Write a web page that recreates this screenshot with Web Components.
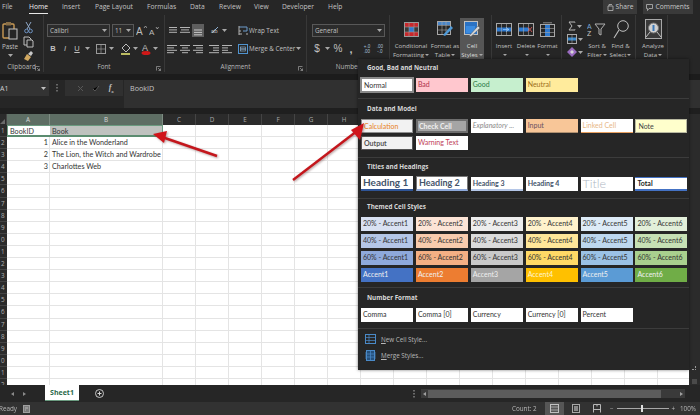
<!DOCTYPE html>
<html>
<head>
<meta charset="utf-8">
<style>
  html, body { margin: 0; padding: 0; background: #262626; }
  body { width: 700px; height: 415px; overflow: hidden; position: relative; font-family: "Open Sans", sans-serif; }
  xl-app { width: 700px; height: 415px; }
</style>
</head>
<body>
<xl-app></xl-app>
<script>
// small helpers for the svg icons, all icons are drawn on their own viewBox
const svg = (w, h, body, vb) => `<svg width="${w}" height="${h}" viewBox="${vb || `0 0 ${w} ${h}`}" fill="none" xmlns="http://www.w3.org/2000/svg">${body}</svg>`;
const caret = (w = 6) => `<span class="car" style="width:${w}px"><svg width="5" height="3" viewBox="0 0 5 3"><path d="M0 0h5L2.5 3z" fill="#a8a8a8"/></svg></span>`;
const lines = (rows) => svg(12, 12, rows.map((r, i) => `<path d="M${r[0]} ${2.5 + i * 2.4}H${r[1]}" stroke="#b4b4b4" stroke-width="1"/>`).join(''));

const ICONS = {
  paste: svg(16, 19, `<rect x="1" y="3" width="11" height="14" rx="1" stroke="#c99a55" stroke-width="1.4"/><rect x="4" y="1" width="5" height="3.5" fill="#8a7048"/><rect x="7" y="8" width="8" height="10" fill="#262626" stroke="#c4c4c4"/>`),
  cut: svg(9, 13, `<path d="M2 1l4 7M7 1L3 8" stroke="#8fa8c8" stroke-width="1"/><circle cx="2.5" cy="10" r="1.8" stroke="#6f94c4"/><circle cx="6.5" cy="10" r="1.8" stroke="#6f94c4"/>`),
  copy: svg(11, 12, `<path d="M1 1h5l2 2v6H1z" stroke="#bdbdbd"/><path d="M4 4h5l1 1v6H4z" fill="#262626" stroke="#bdbdbd"/>`),
  brush: svg(11, 11, `<path d="M1 9l3-5 4 3-3 4z" fill="#d0a860"/><path d="M5 4l3-3 2 2-2 3z" fill="#c8c8c8"/>`),
  grow: svg(11, 11, `<text x="0" y="10" font-family="Liberation Sans" font-size="10" fill="#bdbdbd">A</text><path d="M8 3l1.5-2L11 3" stroke="#bdbdbd" stroke-width=".7"/>`),
  shrink: svg(10, 10, `<text x="0" y="9" font-family="Liberation Sans" font-size="8" fill="#bdbdbd">A</text><path d="M7 1l1.3 2L9.6 1" stroke="#bdbdbd" stroke-width=".7"/>`),
  border: svg(10, 10, `<rect x=".5" y=".5" width="9" height="9" stroke="#9a9a9a"/><path d="M5 .5v9M.5 5h9" stroke="#9a9a9a" stroke-width=".7"/>`),
  fill: svg(10, 12, `<path d="M5 1l4 4-4 4-4-4z" stroke="#bdbdbd"/><rect x="0" y="10" width="9" height="2" fill="#bdbd62"/>`),
  fontcolor: svg(10, 12, `<text x="1" y="8" font-family="Liberation Sans" font-size="9" fill="#c0c0c0">A</text><ellipse cx="5" cy="10" rx="4.5" ry="2" fill="#d01818"/>`),
  orient: svg(11, 11, `<path d="M2 8l6-6" stroke="#8fb0d0"/><text x="1" y="8" font-family="Liberation Sans" font-size="6" fill="#c0c0c0">ab</text>`),
  wrap: svg(10, 11, `<path d="M1 2h8v4H5" stroke="#6d9ccc" fill="none"/><path d="M1 1v9M9 8v2M1 6h2M1 9h3" stroke="#b0b0b0"/>`),
  merge: svg(10, 10, `<rect x=".5" y=".5" width="9" height="9" stroke="#4f93cf"/><path d="M2.5 5h5" stroke="#9cc2e4"/><rect x="2.5" y="3" width="5" height="4" stroke="#9cc2e4" stroke-width=".6"/>`),
  condfmt: svg(15, 15, `<rect x=".5" y=".5" width="14" height="14" fill="#3a3a3a" stroke="#9a9a9a"/><rect x="1" y="1" width="13" height="4" fill="#c8282c"/><rect x="1" y="10" width="13" height="4" fill="#c8282c"/><rect x="5" y="5" width="5" height="5" fill="#2f7ad0"/><path d="M5 .5v14M10 .5v14M.5 5h14M.5 10h14" stroke="#9a9a9a" stroke-width=".6"/>`),
  fmttable: svg(16, 16, `<rect x=".5" y=".5" width="13" height="13" stroke="#a8a8a8"/><rect x="1" y="1" width="12" height="3" fill="#4a86c8"/><path d="M5 .5v13M9 .5v13M.5 4.5h13M.5 9h13" stroke="#a8a8a8" stroke-width=".6"/><path d="M6 14l8-9 2 2-8 8z" fill="#4f9ad8"/>`),
  cellstyle: svg(16, 16, `<rect x=".5" y=".5" width="13" height="13" fill="#2a72c4" stroke="#c0c0c0"/><rect x="2" y="5" width="9" height="7" fill="#3a8be0"/><path d="M5 15l9-10 2 2-9 8.500z" fill="#d8d8d8" stroke="#555" stroke-width=".5"/>`),
  insert: svg(16, 13, `<rect x=".5" y=".5" width="15" height="12" stroke="#a8a8a8"/><rect x="1" y="4.500" width="14" height="4" fill="#2f7ad0"/><path d="M5.500 .5v12M10.500 .5v12" stroke="#a8a8a8" stroke-width=".6"/><path d="M7 6.500h6M10 4.500l3 2-3 2" stroke="#9ad0ff" stroke-width=".7"/>`),
  del: svg(16, 13, `<rect x=".5" y=".5" width="15" height="12" stroke="#a8a8a8"/><rect x="1" y="4.500" width="10" height="4" fill="#2f7ad0"/><path d="M5.500 .5v12M10.500 .5v12" stroke="#a8a8a8" stroke-width=".6"/><path d="M10 4l4 5M14 4l-4 5" stroke="#c05050"/>`),
  format: svg(15, 15, `<path d="M3 .8h9" stroke="#8a8a8a"/><rect x=".5" y="2.500" width="14" height="12" stroke="#a8a8a8"/><rect x="5" y="3" width="5" height="11" fill="#2f7ad0"/><path d="M.5 6.500h14M.5 10.500h14" stroke="#a8a8a8" stroke-width=".6"/>`),
  sum: svg(8, 10, `<path d="M7 1.500V1H1l3 4-3 4h6v-.5" stroke="#b8b8b8"/>`),
  clear: svg(10, 10, `<rect x=".5" y=".5" width="9" height="9" stroke="#a8a8a8"/><rect x="1" y="3.500" width="8" height="3" fill="#3a8bd0"/><path d="M5 .5v9" stroke="#a8a8a8" stroke-width=".6"/>`),
  eraser: svg(10, 10, `<path d="M5 0l5 5-5 5-5-5z" fill="#9a6cc0"/><path d="M5 3l2 2-2 2-2-2z" fill="#d8d8d8"/>`),
  sort: svg(20, 15, `<text x="0" y="6.500" font-family="Liberation Sans" font-size="7" fill="#7aa8d8">A</text><text x="0" y="14" font-family="Liberation Sans" font-size="7" fill="#c8c8c8">Z</text><path d="M8 2h10l-4 5v6l-2-1V7z" stroke="#b0b0b0"/>`),
  find: svg(16, 19, `<circle cx="10" cy="6" r="5.300" stroke="#c0c0c0"/><path d="M6 10L1 18" stroke="#c0c0c0" stroke-width="1.100"/>`),
  analyze: svg(17, 20, `<rect x=".5" y=".5" width="16" height="19" fill="#3a3a3a" stroke="#a8a8a8"/><circle cx="8.500" cy="9" r="5" fill="#d0d0d0" stroke="#777"/><rect x="7.500" y="6" width="2" height="6" fill="#3a78b8"/><path d="M12 13l4 5M5 13l-4 5" stroke="#c0c0c0"/>`),
  newstyle: svg(11, 10, `<rect x=".5" y=".5" width="10" height="9" stroke="#4a8ac8"/><path d="M.5 3.500h10M.5 6.500h10M4 .5v9" stroke="#4a8ac8" stroke-width=".7"/>`),
  mergestyle: svg(11, 11, `<rect x="1.500" y=".5" width="8" height="10" fill="#25507c" stroke="#4a8ac8"/><path d="M0 2v7M11 2v7M5.500 .5v10M1.500 4h8M1.500 7h8" stroke="#4a8ac8" stroke-width=".7"/>`),
};

class XlBase extends HTMLElement {
  constructor() {
    super();
    this.attachShadow({ mode: 'open' }); // open so the texts can be read
  }
  getStyles() { return ''; }
  getMarkup() { return ''; }
  connectedCallback() {
    const template = document.createElement('template');
    template.innerHTML = `<style>${this.getStyles()}</style>${this.getMarkup()}`;
    this.shadowRoot.appendChild(template.content.cloneNode(true));
  }
}

// top tabs + share / comments
class XlTabs extends XlBase {
  getStyles() { return `
    :host { display: flex; height: 14px; background: #262626; color: #c4c4c4; font: 6.700px/14px "Open Sans", sans-serif; position: relative; }
    span { display: block; }
    .on { color: #f0f0f0; border-bottom: 1.500px solid #e8e8e8; height: 12.500px; line-height: 14px; }
    .right { margin-left: auto; display: flex; gap: 6px; padding-right: 7px; }
    .btn { background: #3a3a3a; color: #c8c8c8; height: 14px; display: flex; align-items: center; justify-content: center; gap: 2px; font-size: 6.700px; }
  `; }
  getMarkup() {
    const tabs = [['File', 2, 10], ['Home', 17, 19], ['Insert', 14, 17], ['Page Layout', 16, 37], ['Formulas', 15, 28], ['Data', 15, 14], ['Review', 15, 21], ['View', 14, 16], ['Developer', 12, 31], ['Help', 15, 14]];
    return tabs.map(t => `<span class="${t[0] === 'Home' ? 'on' : ''}" style="margin-left:${t[1]}px;width:${t[2]}px;white-space:nowrap">${t[0]}</span>`).join('') + `
      <div class="right">
        <div class="btn" style="width:34px">${svg(7, 8, '<path d="M1 3h5v4.500H1zM2 3V1.500h3" stroke="#b8b8b8" stroke-width=".8"/>')}Share</div>
        <div class="btn" style="width:50px">${svg(7, 7, '<path d="M.5.5h6v4H3L1.500 6.500v-2h-1z" stroke="#b8b8b8" stroke-width=".8"/>')}Comments</div>
      </div>`;
  }
}

// one ribbon group with its caption at the bottom
class RibbonGroup extends XlBase {
  getStyles() { return `
    :host { display: flex; flex-direction: column; box-sizing: border-box; border-right: 1px solid #383838; height: 57px; margin-top: 1px; flex: none; }
    .body { height: 47px; display: block; }
    .cap { height: 9px; font: 6.300px/9px "Open Sans", sans-serif; color: #b8b8b8; text-align: center; position: relative; }
    .lnch { position: absolute; right: 3px; top: 2px; }
  `; }
  getMarkup() {
    const launch = this.hasAttribute('launcher') ? `<span class="lnch">${svg(5, 5, '<path d="M.5.5h4M.5.5v4M2 2l2.500 2.500M4.500 2.500v2h-2" stroke="#a0a0a0" stroke-width=".7"/>')}</span>` : '';
    return `<div class="body"><slot></slot></div><div class="cap">${this.getAttribute('label') || ''}${launch}</div>`;
  }
}

// tall button with icon and two lines of text
class BigButton extends XlBase {
  getStyles() { return `
    :host { display: flex; flex-direction: column; align-items: center; height: 42px; box-sizing: border-box; color: #c0c0c0; font: 6.100px/9px "Open Sans", sans-serif; white-space: nowrap; flex: none; }
    :host([active]) { background: #565656; color: #dcdcdc; }
    .ic { height: 22px; display: flex; align-items: center; justify-content: center; }
    .tx { text-align: center; margin-top: 1px; }
    .car { display: inline-block; width: 0; height: 0; border: 2px solid transparent; border-top: 2.500px solid #a8a8a8; border-bottom: 0; vertical-align: middle; margin-left: 1px; }
  `; }
  getMarkup() {
    const l1 = this.getAttribute('l1') || '', l2 = this.getAttribute('l2') || '';
    return `<div class="ic"><slot></slot></div><div class="tx">${l1}<br>${l2}<i class="car"></i></div>`;
  }
}

class XlRibbon extends XlBase {
  getStyles() { return `
    :host { display: flex; height: 60px; background: #262626; color: #c0c0c0; font: 6.300px "Open Sans", sans-serif; overflow: hidden; }
    .row { display: flex; align-items: center; height: 13px; }
    .car { display: flex; justify-content: center; align-items: center; flex: none; height: 13px; }
    .box { height: 13px; box-sizing: border-box; border: 1px solid #585858; display: flex; align-items: center; justify-content: space-between; padding: 0 2px; color: #c0c0c0; background: #2c2c2c; font: 6.300px "Open Sans", sans-serif; }
    .it { flex: none; width: 12px; height: 13px; display: flex; align-items: center; justify-content: center; font: 7.500px "Liberation Sans", sans-serif; color: #c0c0c0; }
    .hl { background: #5e5e5e; }
    .sm { color: #c0c0c0; white-space: nowrap; }
    .clip { display: flex; padding: 6px 0 0 2px; gap: 3px; }
    .col { display: flex; flex-direction: column; align-items: center; }
    .btns { display: flex; }
  `; }
  getMarkup() { return `
    <ribbon-group label="Clipboard" launcher style="width:44px;text-align:left">
      <div class="clip">
        <div class="col" style="width:16px">
          ${ICONS.paste}
          <span style="margin-top:2px;line-height:9px">Paste</span>
          <span class="car" style="height:8px"><svg width="5" height="3" viewBox="0 0 5 3"><path d="M0 0h5L2.500 3z" fill="#a8a8a8"/></svg></span>
        </div>
        <div class="col" style="width:14px;gap:2px;margin-left:0px">
          ${ICONS.cut}${ICONS.copy}${ICONS.brush}
        </div>
      </div>
    </ribbon-group>
    <ribbon-group label="Font" launcher style="width:121px">
      <div class="row" style="margin:9px 0 5px 3px">
        <div class="box" style="width:63px">Calibri ${caret(5)}</div>
        <div class="box" style="width:22px;margin-left:2px">11 ${caret(5)}</div>
        <span class="it" style="margin-left:1px">${ICONS.grow}</span>
        <span class="it" style="margin-left:1px">${ICONS.shrink}</span>
      </div>
      <div class="row" style="margin-left:3px">
        <span class="it"><b>B</b></span><span class="it"><i>I</i></span><span class="it"><u>U</u></span>${caret(8)}
        <span class="it" style="margin-left:4px">${ICONS.border}</span>${caret(8)}
        <span class="it" style="margin-left:5px">${ICONS.fill}</span>${caret(6)}
        <span class="it" style="margin-left:2px">${ICONS.fontcolor}</span>${caret(6)}
      </div>
    </ribbon-group>
    <ribbon-group label="Alignment" launcher style="width:142px">
      <div class="row" style="margin:9px 0 5px 2px">
        <span class="it">${lines([[2, 10], [2, 10], [2, 10]])}</span>
        <span class="it">${lines([[1, 11], [2, 10], [1, 11]])}</span>
        <span class="it hl" style="margin-left:1px">${svg(12, 12, '<path d="M2 5h8M2 7.400h8M2 9.800h8" stroke="#c8c8c8"/>')}</span>
        <span class="it" style="margin-left:5px">${ICONS.orient}</span>${caret(6)}
        <span class="it" style="margin-left:11px;width:10px">${ICONS.wrap}</span>
        <span class="sm" style="margin-left:1px">Wrap Text</span>
      </div>
      <div class="row" style="margin-left:1px">
        <span class="it">${lines([[1, 11], [1, 8], [1, 11], [1, 8]])}</span>
        <span class="it" style="margin-left:1px">${lines([[1, 11], [3, 9], [1, 11], [3, 9]])}</span>
        <span class="it" style="margin-left:1px">${lines([[1, 11], [4, 11], [1, 11], [4, 11]])}</span>
        <span class="it" style="margin-left:4px">${lines([[1, 11], [5, 11], [5, 11], [1, 11]])}</span>
        <span class="it" style="margin-left:1px">${lines([[1, 11], [1, 7], [1, 7], [1, 11]])}</span>
        <span class="it" style="margin-left:5px;width:10px">${ICONS.merge}</span>
        <span class="sm" style="margin-left:1px;width:46px">Merge &amp; Center</span>
        ${caret(6)}
      </div>
    </ribbon-group>
    <ribbon-group label="Number" style="width:83px">
      <div class="row" style="margin:9px 0 5px 5px">
        <div class="box" style="width:73px">General ${caret(5)}</div>
      </div>
      <div class="row" style="margin-left:4px">
        <span class="it" style="font-size:10px">$</span>${caret(8)}
        <span class="it" style="font-size:10px;margin-left:1px">%</span>
        <span class="it" style="font-size:11px;margin-left:1px"><b>,</b></span>
        <span class="it" style="margin-left:4px;font-size:4.500px;line-height:5px;text-align:center;color:#a8c0d8">+.0<br>.00</span>
        <span class="it" style="margin-left:1px;font-size:4.500px;line-height:5px;text-align:center;color:#a8c0d8">.00<br>-.0</span>
      </div>
    </ribbon-group>
    <ribbon-group style="width:102px">
      <div class="btns" style="padding:3px 0 0 4px">
        <big-button l1="Conditional" l2="Formatting" style="width:34px">${ICONS.condfmt}</big-button>
        <big-button l1="Format as" l2="Table" style="width:30px;margin-left:2px">${ICONS.fmttable}</big-button>
        <big-button l1="Cell" l2="Styles" active style="width:24px">${ICONS.cellstyle}</big-button>
      </div>
    </ribbon-group>
    <ribbon-group style="width:70px">
      <div class="btns" style="padding:3px 0 0 1px">
        <big-button l1="Insert" style="width:22px">${ICONS.insert}</big-button>
        <big-button l1="Delete" style="width:22px">${ICONS.del}</big-button>
        <big-button l1="Format" style="width:21px">${ICONS.format}</big-button>
      </div>
    </ribbon-group>
    <ribbon-group style="width:74px">
      <div class="btns" style="padding:3px 0 0 3px">
        <div class="col" style="width:20px;gap:3px;padding-top:3px">
          <div class="row" style="height:10px">${ICONS.sum}${caret(6)}</div>
          <div class="row" style="height:10px">${ICONS.clear}${caret(6)}</div>
          <div class="row" style="height:10px">${ICONS.eraser}${caret(6)}</div>
        </div>
        <big-button l1="Sort &amp;" l2="Filter" style="width:24px">${ICONS.sort}</big-button>
        <big-button l1="Find &amp;" l2="Select" style="width:23px">${ICONS.find}</big-button>
      </div>
    </ribbon-group>
    <ribbon-group style="width:32px;border-right:1px solid #383838">
      <div class="btns" style="padding:3px 0 0 3px">
        <big-button l1="Analyze" l2="Data" style="width:28px">${ICONS.analyze}</big-button>
      </div>
    </ribbon-group>
  `; }
}

class XlFormula extends XlBase {
  getStyles() { return `
    :host { display: flex; flex-direction: column; height: 40px; background: #262626; color: #bdbdbd; font: 7px "Open Sans", sans-serif; }
    .gap { height: 6px; background: #1c1c1c; }
    .bar { display: flex; height: 28px; background: #262626; }
    .name { width: 49px; height: 16px; background: #333; display: flex; align-items: center; justify-content: space-between; padding: 0 3px 0 0; box-sizing: border-box; color: #d0d0d0; }
    .dots { width: 16px; height: 16px; display: flex; align-items: center; justify-content: center; }
    .fx { width: 58px; height: 16px; background: #303030; display: flex; align-items: center; justify-content: space-around; padding: 0 5px 0 8px; box-sizing: border-box; }
    .input { flex: 1; background: #303030; margin-left: 1px; padding: 3px 6px; font-size: 7.200px; color: #c4c4c4; }
    .under { height: 6px; background: #1f1f1f; }
  `; }
  getMarkup() { return `
    <div class="gap"></div>
    <div class="bar">
      <div class="name"><span>A1</span><svg width="5" height="3" viewBox="0 0 5 3"><path d="M0 0h5L2.500 3z" fill="#c0c0c0"/></svg></div>
      <div class="dots"><svg width="2" height="8" viewBox="0 0 2 8"><path d="M1 0v1.500M1 3v1.500M1 6v1.500" stroke="#a8a8a8"/></svg></div>
      <div class="fx">
        <svg width="7" height="7" viewBox="0 0 7 7"><path d="M1 1l5 5M6 1L1 6" stroke="#585858"/></svg>
        <svg width="8" height="7" viewBox="0 0 8 7"><path d="M1 4l2 2 4-5" stroke="#585858"/></svg>
        <span style="font:italic bold 8px 'Liberation Serif',serif;color:#c0c0c0">f<sub style="font-size:5px">x</sub></span>
      </div>
      <div class="input">BookID</div>
    </div>
    <div class="under"></div>
  `; }
}

// worksheet grid, rows are 12.1px high
class XlSheet extends XlBase {
  getStyles() { return `
    :host { display: flex; height: 271px; background: #fff; overflow: hidden; }
    .grid { display: grid; grid-template-columns: 7px 43px 113px repeat(16, 33px); grid-template-rows: 11px repeat(22, 12.100px); width: 689px; flex: none; font: 7.200px/12px Lato, sans-serif; color: #333; overflow: hidden; position: relative; }
    .ch { background: #2b2b2b; color: #a8a8a8; text-align: center; font: 6.300px/11px "Open Sans", sans-serif; border-right: 1px solid #444; box-sizing: border-box; }
    .ch.sel { background: #5e6e64; color: #d8d8d8; border-right-color: #7d8c82; }
    .corner { display: flex; align-items: flex-end; justify-content: flex-end; padding: 0 1px 1px 0; }
    .rh { background: #2b2b2b; color: #b0b0b0; font: 6.300px/12px "Open Sans", sans-serif; text-align: left; overflow: hidden; text-indent: 1px; border-bottom: 1px solid #444; box-sizing: border-box; }
    .c { border-right: 1px solid #e4e4e4; border-bottom: 1px solid #e4e4e4; box-sizing: border-box; padding: 0 1px 0 2px; white-space: nowrap; min-width: 0; }
    .num { text-align: right; }
    .a1 { border: 1px solid #6b9b80; border-right: 0; border-bottom: 2px solid #5b8c70; }
    .b1 { background: #bfc2bf; border: 1px solid #6b9b80; border-left: 0; border-bottom: 2px solid #5b8c70; }
    .sb { flex: 1; background: #2b2b2b; position: relative; }
    .arr { position: absolute; left: 3px; bottom: 1px; width: 5px; height: 5px; background: #4a4a4a; }
    .grip { position: absolute; left: 3px; top: 252px; width: 3px; height: 3px; border-right: 1px dotted #999; border-bottom: 1px dotted #999; }
  `; }
  getMarkup() {
    // letters after H sit under the open menu, so only their boxes are kept
    const cols = ['A', 'B', 'C', 'D', 'E', 'F', 'G', 'H', '', '', '', '', '', '', '', '', '', ''];
    const data = { 1: ['BookID', 'Book'], 2: ['1', 'Alice in the Wonderland'], 3: ['2', 'The Lion, the Witch and Wardrobe'], 4: ['3', 'Charlottes Web'] };
    let out = `<div class="ch corner"><svg width="5" height="5" viewBox="0 0 5 5"><path d="M5 0v5H0z" fill="#6a6a6a"/></svg></div>` + cols.map((c, i) => `<div class="ch ${i < 2 ? 'sel' : ''}">${c}</div>`).join('');
    for (let r = 1; r <= 22; r++) {
      const d = data[r] || ['', ''];
      out += `<div class="rh">${r % 10}</div>`;
      cols.forEach((c, i) => {
        let cls = 'c';
        if (r === 1 && i === 0) cls += ' a1';
        if (r === 1 && i === 1) cls += ' b1';
        if (i === 0 && r > 1) cls += ' num';
        out += `<div class="${cls}">${i < 2 ? d[i] : ''}</div>`;
      });
    }
    return `<div class="grid">${out}</div><div class="sb"><div class="grip"></div><div class="arr"></div></div>`;
  }
}

class XlSheetTabs extends XlBase {
  getStyles() { return `
    :host { display: flex; align-items: flex-start; height: 17px; background: #262626; color: #b0b0b0; font: 7px "Open Sans", sans-serif; }
    .nav { width: 45px; display: flex; justify-content: space-around; height: 17px; align-items: center; padding: 0 14px 0 6px; box-sizing: border-box; }
    .tab { width: 34px; height: 15px; background: #fff; color: #2b6a4a; font: 700 7px/15px "Open Sans", sans-serif; text-align: center; border-bottom: 1px solid #6b9b80; box-sizing: content-box; }
    .plus { margin-left: 16px; height: 17px; display: flex; align-items: center; }
    .dots { margin-left: 309px; height: 17px; display: flex; align-items: center; }
    .track { margin: 4px 0 0 6px; width: 264px; height: 9px; background: #3a3a3a; display: flex; align-items: center; }
    .end { flex: none; width: 7px; height: 9px; display: flex; align-items: center; justify-content: center; }
    .thumb { width: 233px; height: 8px; background: #5c5c5c; }
  `; }
  getMarkup() { return `
    <div class="nav">
      <svg width="3" height="4" viewBox="0 0 3 4"><path d="M3 0v4L0 2z" fill="#8a8a8a"/></svg>
      <svg width="3" height="4" viewBox="0 0 3 4"><path d="M0 0v4l3-2z" fill="#8a8a8a"/></svg>
    </div>
    <div class="tab">Sheet1</div>
    <div class="plus"><svg width="9" height="9" viewBox="0 0 9 9"><circle cx="4.500" cy="4.500" r="4" stroke="#c8c8c8" fill="none"/><path d="M2.500 4.500h4M4.500 2.500v4" stroke="#d8d8d8"/></svg></div>
    <div class="dots"><svg width="2" height="8" viewBox="0 0 2 8"><path d="M1 0v1.500M1 3v1.500M1 6v1.500" stroke="#b0b0b0"/></svg></div>
    <div class="track">
      <span class="end"><svg width="3" height="4" viewBox="0 0 3 4"><path d="M3 0v4L0 2z" fill="#a0a0a0"/></svg></span>
      <div class="thumb"></div>
      <span class="end" style="margin-left:auto"><svg width="3" height="4" viewBox="0 0 3 4"><path d="M0 0v4l3-2z" fill="#a0a0a0"/></svg></span>
    </div>
  `; }
}

class XlStatus extends XlBase {
  getStyles() { return `
    :host { display: flex; align-items: center; height: 13px; background: #323232; color: #b8b8b8; font: 6.300px "Open Sans", sans-serif; }
    .ready { margin-left: -1px; width: 24px; }
    .count { margin-left: auto; width: 33px; white-space: nowrap; }
    .view { height: 13px; display: flex; align-items: center; justify-content: center; }
    .on { background: #565656; }
    .zoom { display: flex; align-items: center; width: 65px; margin-left: 4px; justify-content: space-between; }
    .slider { position: relative; width: 52px; height: 1px; background: #a8a8a8; }
    .slider i { position: absolute; left: 24px; top: -3px; width: 2px; height: 7px; background: #e0e0e0; }
    .pct { width: 18px; margin-left: 3px; margin-right: 4px; text-align: right; white-space: nowrap; }
  `; }
  getMarkup() { return `
    <span class="ready">Ready</span>
    ${svg(7, 8, '<rect x=".5" y=".5" width="6" height="7" fill="#7c7c7c" stroke="#a0a0a0"/><path d="M2 3h3M2 5h1" stroke="#ddd" stroke-width=".6"/>')}
    <span class="count">Count: 2</span>
    <div class="view on" style="width:19px">${svg(9, 9, '<rect x=".5" y=".5" width="8" height="8" stroke="#c0c0c0"/><path d="M.5 3h8M.5 6h8" stroke="#c0c0c0" stroke-width=".7"/>')}</div>
    <div class="view" style="width:24px">${svg(8, 9, '<rect x=".5" y=".5" width="7" height="8" stroke="#a8a8a8"/><rect x="2" y="2" width="4" height="5" fill="#888"/>')}</div>
    <div class="view" style="width:18px">${svg(8, 9, '<path d="M.5 8.500V.5h7v8M.5 5.500h7M4 .5v2" stroke="#b8b8b8"/>')}</div>
    <div class="zoom"><span>−</span><div class="slider"><i></i></div><span>+</span></div>
    <span class="pct">100%</span>
  `; }
}

// one swatch of the gallery
class StyleChip extends XlBase {
  getStyles() { return `
    :host { display: block; box-sizing: border-box; height: 14px; padding: 0 2px; overflow: hidden; white-space: nowrap; font: 7px/13px Lato, sans-serif; background: var(--bg, #fff); color: var(--fg, #333); }
  `; }
  getMarkup() { return `<slot></slot>`; }
}

// caption + gallery, divider is the border at the bottom
class StyleSection extends XlBase {
  getStyles() { return `
    :host { display: block; border-bottom: 1px solid #3c3c3c; }
    .lab { font: 700 6.300px/10px "Open Sans", sans-serif; color: #d8d8d8; height: 10px; padding-left: 9px; margin-bottom: 5px; }
    .gal { display: grid; grid-template-columns: repeat(6, 52px); gap: 3px 2.900px; padding-left: 3px; }
  `; }
  getMarkup() { return `<div class="lab">${this.getAttribute('label')}</div><div class="gal"><slot></slot></div>`; }
}

class StylesMenu extends XlBase {
  getStyles() { return `
    :host { display: block; position: absolute; left: 358px; top: 59px; width: 331px; height: 311px; background: #262626; box-shadow: 0 0 3px rgba(0,0,0,.5); }
    .act { display: flex; align-items: center; gap: 5px; padding-left: 7px; height: 16px; font: 6.300px "Open Sans", sans-serif; color: #b8b8b8; }
    .acts { padding-top: 2px; }
    u { text-underline-offset: 1px; }
    .cal { --bg: #f2f2f2; --fg: #e8821e; border: 1px solid #8f8f8f; line-height: 12px; }
    .chk { --bg: #a5a5a5; --fg: #f0f0f0; border: 2px solid #6e6e6e; line-height: 10px; font-weight: 700; padding: 0 1px; }
    .inp { --bg: #f8c698; --fg: #6a5060; border-bottom: 1px solid #b09070; }
    .lnk { --fg: #e8b888; border-bottom: 1px solid #e8a060; }
    .not { --bg: #ffffcc; --fg: #444; border: 1px solid #b8b8a0; line-height: 12px; }
    .out { --bg: #f2f2f2; --fg: #555; border: 1px solid #555; line-height: 12px; font-weight: 700; }
    .h1 { --fg: #44546a; font-size: 10px; font-weight: 700; border-bottom: 2px solid #2f5597; line-height: 12px; height: 15px; margin-top: -1px; }
    .h2 { --fg: #44546a; font-size: 9px; font-weight: 700; border: 1px solid #777; border-bottom: 2px solid #8ea9db; line-height: 12px; height: 15px; margin-top: -1px; }
    .h3 { --fg: #44546a; font-weight: 700; border-bottom: 2px solid #b4c6e7; }
    .h4 { --fg: #44546a; font-weight: 700; }
    .tit { --fg: #aeb6c2; font-size: 12.500px; font-weight: 300; line-height: 13px; }
    .tot { --fg: #222; font-weight: 700; border-top: 1px solid #4472c4; border-bottom: 2px solid #4472c4; line-height: 11px; }
  `; }
  getMarkup() {
    const row = (n, c1) => [1, 2, 3, 4, 5, 6].map((i, k) => `<style-chip style="--bg:${c1[k]}">${n} - Accent${i}</style-chip>`).join('');
    const c20 = ['#d9e1f2', '#fce4d6', '#ededed', '#fff2cc', '#ddebf7', '#e2efda'];
    const c40 = ['#b4c6e7', '#f8cbad', '#dbdbdb', '#ffe699', '#bdd7ee', '#c6e0b4'];
    const c60 = ['#8ea9db', '#f4b084', '#c9c9c9', '#ffd966', '#9bc2e6', '#a9d08e'];
    const acc = ['#4472c4', '#ed7d31', '#a5a5a5', '#ffc000', '#5b9bd5', '#70ad47'];
    return `
    <style-section label="Good, Bad and Neutral" style="padding:4px 0 6px">
      <style-chip style="border:2px solid #8a8a8a;padding:0 2px;margin:-1px 0 -1px -1px;width:54px;height:16px;line-height:12px">Normal</style-chip>
      <style-chip style="--bg:#ffc7ce;--fg:#b0304a">Bad</style-chip>
      <style-chip style="--bg:#c6efce;--fg:#2c7a45">Good</style-chip>
      <style-chip style="--bg:#ffeb9c;--fg:#a07020">Neutral</style-chip>
    </style-section>
    <style-section label="Data and Model" style="padding:5px 0 7px">
      <style-chip class="cal">Calculation</style-chip>
      <style-chip class="chk">Check Cell</style-chip>
      <style-chip style="--fg:#8a8a8a;font-style:italic">Explanatory ...</style-chip>
      <style-chip class="inp">Input</style-chip>
      <style-chip class="lnk">Linked Cell</style-chip>
      <style-chip class="not">Note</style-chip>
      <style-chip class="out">Output</style-chip>
      <style-chip style="--fg:#c04058">Warning Text</style-chip>
    </style-section>
    <style-section label="Titles and Headings" style="padding:4px 0 7px">
      <style-chip class="h1">Heading 1</style-chip>
      <style-chip class="h2">Heading 2</style-chip>
      <style-chip class="h3">Heading 3</style-chip>
      <style-chip class="h4">Heading 4</style-chip>
      <style-chip class="tit">Title</style-chip>
      <style-chip class="tot">Total</style-chip>
    </style-section>
    <style-section label="Themed Cell Styles" style="padding:3px 0 5px">
      ${row('20%', c20)}${row('40%', c40)}${row('60%', c60)}
      ${acc.map((c, k) => `<style-chip style="--bg:${c};--fg:${k === 3 ? '#fff6d0' : '#f0f0f0'}">Accent${k + 1}</style-chip>`).join('')}
    </style-section>
    <style-section label="Number Format" style="padding:5px 0 6px">
      <style-chip>Comma</style-chip>
      <style-chip>Comma [0]</style-chip>
      <style-chip>Currency</style-chip>
      <style-chip>Currency [0]</style-chip>
      <style-chip>Percent</style-chip>
    </style-section>
    <div class="acts">
      <div class="act">${ICONS.newstyle}<span><u>N</u>ew Cell Style...</span></div>
      <div class="act">${ICONS.mergestyle}<span><u>M</u>erge Styles...</span></div>
    </div>`;
  }
}

// the two red arrows drawn over the screenshot
class RedArrows extends XlBase {
  getStyles() { return `
    :host { display: block; position: absolute; left: 0; top: 0; width: 700px; height: 415px; pointer-events: none; }
    svg { display: block; filter: drop-shadow(1px 1px 1px rgba(90,40,40,.45)); }
  `; }
  getMarkup() { return `
    <svg width="700" height="415" viewBox="0 0 700 415">
      <path d="M217 156L162 137" stroke="#c4161c" stroke-width="2.400"/>
      <path d="M153 134L167 131L164 143z" fill="#d0141a"/>
      <path d="M293 180L357 131" stroke="#c4161c" stroke-width="2.400"/>
      <path d="M364 123L351 130L360 140z" fill="#d0141a"/>
    </svg>
  `; }
}

class XlApp extends XlBase {
  getStyles() { return `
    :host { display: flex; flex-direction: column; position: relative; filter: blur(.3px); }
  `; }
  getMarkup() { return `
    <xl-tabs></xl-tabs>
    <xl-ribbon></xl-ribbon>
    <xl-formula></xl-formula>
    <xl-sheet></xl-sheet>
    <xl-sheet-tabs></xl-sheet-tabs>
    <xl-status></xl-status>
    <styles-menu></styles-menu>
    <red-arrows></red-arrows>
  `; }
}

customElements.define('xl-tabs', XlTabs);
customElements.define('ribbon-group', RibbonGroup);
customElements.define('big-button', BigButton);
customElements.define('xl-ribbon', XlRibbon);
customElements.define('xl-formula', XlFormula);
customElements.define('xl-sheet', XlSheet);
customElements.define('xl-sheet-tabs', XlSheetTabs);
customElements.define('xl-status', XlStatus);
customElements.define('style-chip', StyleChip);
customElements.define('style-section', StyleSection);
customElements.define('styles-menu', StylesMenu);
customElements.define('red-arrows', RedArrows);
customElements.define('xl-app', XlApp);
</script>
</body>
</html>
